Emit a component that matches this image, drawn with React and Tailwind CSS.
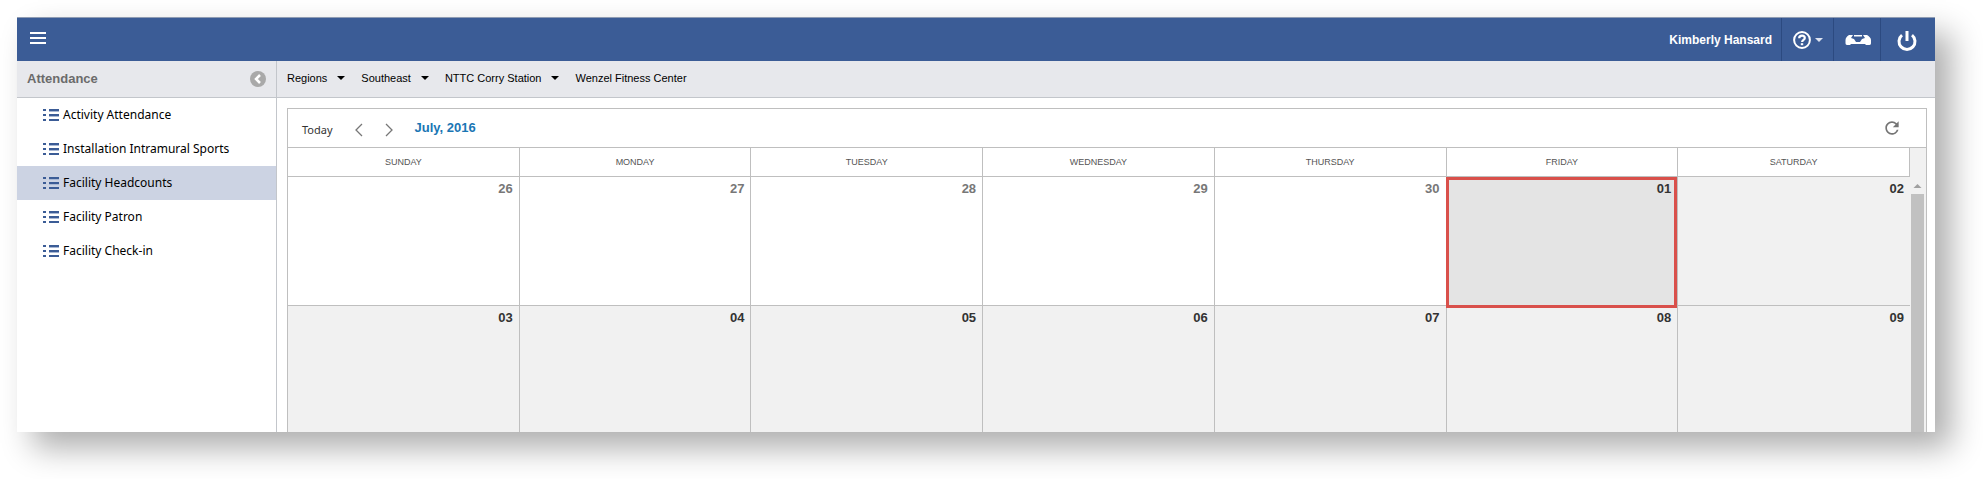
import { MdRefresh } from 'react-icons/md'

const NAV_ITEMS = [
  'Activity Attendance',
  'Installation Intramural Sports',
  'Facility Headcounts',
  'Facility Patron',
  'Facility Check-in',
]
const ACTIVE_ITEM = 'Facility Headcounts'

const CRUMBS = ['Regions', 'Southeast', 'NTTC Corry Station', 'Wenzel Fitness Center']

const DAYS = ['Sunday', 'Monday', 'Tuesday', 'Wednesday', 'Thursday', 'Friday', 'Saturday']

const FIRST_WEEK = [
  { day: '26', other: true },
  { day: '27', other: true },
  { day: '28', other: true },
  { day: '29', other: true },
  { day: '30', other: true },
  { day: '01', selected: true },
  { day: '02' },
]
const SECOND_WEEK = ['03', '04', '05', '06', '07', '08', '09']

function ListIcon() {
  return (
    <svg width="16" height="12" viewBox="0 0 16 12" fill="#3b5c96" className="shrink-0">
      {[0, 5, 10].map(y => (
        <g key={y}>
          <rect x="0" y={y} width="3" height="2" />
          <rect x="6" y={y} width="10" height="2" />
        </g>
      ))}
      <path d="M6 2.5h10M6 7.5h10" stroke="#a9b8d4" />
    </svg>
  )
}

function TopBar() {
  return (
    <header className="flex h-11 items-stretch justify-between border-t border-[#8f9cb3] bg-[#3b5c96] text-white">
      <button aria-label="Menu" className="px-[13px] pb-1">
        <svg width="16" height="12" viewBox="0 0 16 12" fill="#fff">
          <path d="M0 0h16v2H0zM0 5h16v2H0zM0 10h16v2H0z" />
        </svg>
      </button>
      <div className="flex items-stretch">
        <span className="self-center pr-[9px] text-xs font-bold">Kimberly Hansard</span>
        <button aria-label="Help" className="flex w-[52px] items-center justify-center gap-1 border-l border-[#2c4a80]">
          <svg width="18" height="18" viewBox="0 0 18 18" fill="none" stroke="#fff">
            <circle cx="9" cy="9" r="7.9" strokeWidth="2" />
            <path d="M6.2 7.2C6.2 5.5 7.4 4.6 9 4.6s2.800 1 2.800 2.400c0 1.800-2.700 2-2.700 4" strokeWidth="2.2" />
            <path d="M9 12.2v2" strokeWidth="2.4" />
          </svg>
          <svg width="8" height="4" viewBox="0 0 8 4" fill="#dde3f0"><path d="M0 0h8L4 4z" /></svg>
        </button>
        <button aria-label="Inbox" className="flex w-[47px] items-center justify-center border-l border-[#2c4a80] pl-[2px]">
          <svg width="26" height="10" viewBox="0 0 26 10" fill="#fff">
            <path d="M4 0h4L6 3l3 1 2 3h4l2-3 3-1-2-3h4c2 1 4 3 4 5v3c0 1-.5 2-1.500 2H21l-1-1H6l-1 1H2C1 10 .5 9 .5 8V5c0-2 1.500-4 3.500-5z" />
            <path d="M9 0h8v1.5H9z" />
          </svg>
        </button>
        <button aria-label="Log out" className="flex w-[55px] items-center justify-center border-l border-[#2c4a80] pt-[2px] pr-[3px]">
          <svg width="20" height="22" viewBox="0 0 20 22" fill="none" stroke="#fff" strokeWidth="3">
            <path d="M10 1v10" />
            <path d="M5 5.2a8 8 0 1 0 10 0" />
          </svg>
        </button>
      </div>
    </header>
  )
}

function Sidebar() {
  return (
    <aside className="w-[260px] shrink-0 border-r border-[#c3c6cb]">
      <div className="flex h-[37px] items-center justify-between border-b border-[#c3c6cb] bg-[#e7e8ec] px-[10px]">
        <h2 className="text-[13px] font-bold text-[#6b6b6b]">Attendance</h2>
        <button aria-label="Collapse">
          <svg width="16" height="16" viewBox="0 0 16 16" fill="none">
            <circle cx="8" cy="8" r="8" fill="#a9a9a9" />
            <path d="M10 4L6 8l4 4" stroke="#fff" strokeWidth="2.5" />
          </svg>
        </button>
      </div>
      <nav className="font-['Noto_Sans',sans-serif] text-xs text-black">
        {NAV_ITEMS.map(item => (
          <a key={item} href="#" className={`flex h-[34px] items-center gap-1 pl-[26px] ${item === ACTIVE_ITEM ? 'bg-[#ccd3e3]' : ''}`}>
            <ListIcon />
            {item}
          </a>
        ))}
      </nav>
    </aside>
  )
}

function Breadcrumbs() {
  return (
    <div className="flex h-[37px] items-center gap-4 border-b border-[#c3c6cb] bg-[#e7e8ec] px-[10px] pb-[2px] text-[11px] text-black">
      {CRUMBS.map((crumb, i) => (
        <button key={crumb} className="flex items-center gap-[10px]">
          {crumb}
          {i < CRUMBS.length - 1 && (
            <svg width="8" height="4" viewBox="0 0 8 4"><path d="M0 0h8L4 4z" /></svg>
          )}
        </button>
      ))}
    </div>
  )
}

function Calendar() {
  return (
    <section className="mt-[10px] mr-2 ml-[10px] border border-b-0 border-[#bfbfbf]">
      <div className="flex h-[39px] items-center border-b border-[#bfbfbf] pt-1 pr-6 pl-[14px]">
        <button className="font-['Noto_Sans',sans-serif] text-[11px] text-[#333]">Today</button>
        <button aria-label="Previous month" className="ml-[22px]">
          <svg width="8" height="14" viewBox="0 0 8 14" fill="none" stroke="#777" strokeWidth="1.3"><path d="M7 1L1 7l6 6" /></svg>
        </button>
        <button aria-label="Next month" className="ml-[22px]">
          <svg width="8" height="14" viewBox="0 0 8 14" fill="none" stroke="#777" strokeWidth="1.3"><path d="M1 1l6 6-6 6" /></svg>
        </button>
        <h1 className="ml-[22px] pb-1 text-[13px] font-bold text-[#1a76b4]">July, 2016</h1>
        <button aria-label="Refresh" className="ml-auto pb-1 text-[#757575]">
          <MdRefresh size={20} />
        </button>
      </div>
      <div className="flex bg-[#f1f1f1]">
        <table className="w-full table-fixed border-separate border-spacing-0">
          <thead>
            <tr className="h-[29px] bg-white text-[9px] text-[#555]">
              {DAYS.map(day => (
                <th key={day} className="border-r border-b border-[#bfbfbf] p-0 pt-[2px] font-normal uppercase">{day}</th>
              ))}
            </tr>
          </thead>
          <tbody className="text-right text-[13px] leading-4 font-bold">
            <tr className="h-[129px]">
              {FIRST_WEEK.map(({ day, other, selected }) => (
                <td
                  key={day}
                  className={`relative border-b border-[#bfbfbf] px-[6px] py-1 align-top not-last:border-r ${other ? 'bg-white text-[#777]' : 'text-[#333]'}`}
                >
                  {selected && <div className="absolute top-0 right-0 -bottom-[3px] -left-px border-3 border-[#d9504b] bg-[#e4e4e4]" />}
                  <span className="relative">{day}</span>
                </td>
              ))}
            </tr>
            <tr className="h-[126px]">
              {SECOND_WEEK.map(day => (
                <td key={day} className="border-[#bfbfbf] px-[6px] py-1 align-top text-[#333] not-last:border-r">{day}</td>
              ))}
            </tr>
          </tbody>
        </table>
        <div className="flex w-4 shrink-0 flex-col items-start gap-[6px] pt-9 pl-px">
          <svg width="13" height="4" viewBox="0 0 13 4" fill="#a0a0a0"><path d="M6.5 0L10.5 4h-8z" /></svg>
          <div className="w-[13px] flex-1 bg-[#c1c1c1]" />
        </div>
      </div>
    </section>
  )
}

export default function App() {
  return (
    <div className="overflow-hidden bg-white pt-[17px] pr-12 pb-12 pl-[17px] font-['Liberation_Sans',Arial,sans-serif]">
      <div className="bg-white shadow-[16px_16px_30px_rgba(0,0,0,0.32)]">
        <TopBar />
        <div className="flex">
          <Sidebar />
          <main className="min-w-0 flex-1">
            <Breadcrumbs />
            <Calendar />
          </main>
        </div>
      </div>
    </div>
  )
}
